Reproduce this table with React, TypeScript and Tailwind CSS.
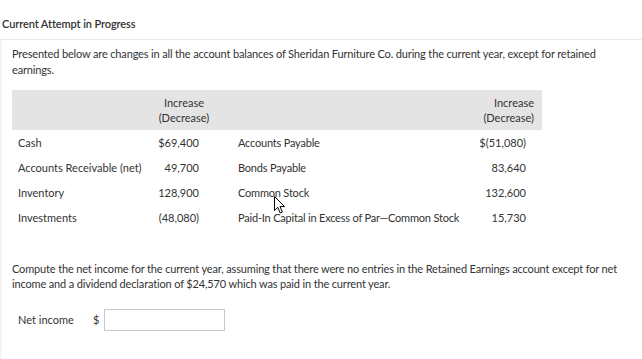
import React from "react";

const rows = [
  ["Cash", "$69,400", "Accounts Payable", "$(51,080)"],
  ["Accounts Receivable (net)", "49,700", "Bonds Payable", "83,640"],
  ["Inventory", "128,900", "Common Stock", "132,600"],
  ["Investments", "(48,080)", "Paid-In Capital in Excess of Par\u2014Common Stock", "15,730"],
];

function Cursor() {
  return (
    <svg
      className="absolute left-[274px] top-[196px]"
      width="12"
      height="18"
      viewBox="0 0 12 18"
    >
      <path
        d="M0.5 0.5 L0.5 14.5 L3.8 11.4 L6.3 17 L8.4 16.1 L6 10.6 L10.6 10.6 Z"
        fill="#fff"
        stroke="#000"
        strokeWidth="1"
        strokeLinejoin="round"
      />
    </svg>
  );
}

export default function App() {
  return (
    <div className="relative h-[359px] w-[642px] overflow-hidden bg-white font-['Lato',sans-serif] text-[11px] text-[#333]">
      <div className="flex h-[40px] items-end border-b border-[#ebebeb] pb-[7px] pl-[2px]">
        <h1 className="text-[11px] font-semibold leading-[16px] tracking-[-0.1px] text-[#333]">
          Current Attempt in Progress
        </h1>
      </div>

      <div className="h-[319px] border-l-2 border-[#f4f4f4] pl-[10px] pt-[6px]">
        <p className="w-[620px] leading-[16px] tracking-[-0.15px]">
          Presented below are changes in all the account balances of Sheridan Furniture Co. during the current year, except for retained earnings.
        </p>

        <div className="mt-[12px] w-[530px]">
          <div className="grid h-[40px] grid-cols-[140px_64px_1fr_70px] items-center bg-[#e4e4e4] leading-[15px]">
            <div />
            <div className="text-center">
              Increase
              <br />
              (Decrease)
            </div>
            <div />
            <div className="pr-[8px] text-right">
              Increase
              <br />
              (Decrease)
            </div>
          </div>
          {rows.map(([a, b, c, d]) => (
            <div
              key={a}
              className="grid h-[25px] grid-cols-[140px_64px_1fr_70px] items-center pt-px"
            >
              <div className="whitespace-nowrap pl-[6px]">{a}</div>
              <div className="pr-[17px] text-right">{b}</div>
              <div className="whitespace-nowrap pl-[22px] tracking-[-0.2px]">{c}</div>
              <div className="pr-[16px] text-right">{d}</div>
            </div>
          ))}
        </div>

        <p className="mt-[31px] w-[620px] leading-[15px] tracking-[-0.15px]">
          Compute the net income for the current year, assuming that there were no entries in the Retained Earnings account except for net income and a dividend declaration of $24,570 which was paid in the current year.
        </p>

        <div className="mt-[18px] flex items-center">
          <span className="w-[81px] pl-[6px]">Net income</span>
          <span className="w-[11px]">$</span>
          <input
            type="text"
            className="h-[22px] w-[121px] border border-[#c8c8c8] bg-white px-1 outline-none"
          />
        </div>
      </div>
      <Cursor />
    </div>
  );
}
